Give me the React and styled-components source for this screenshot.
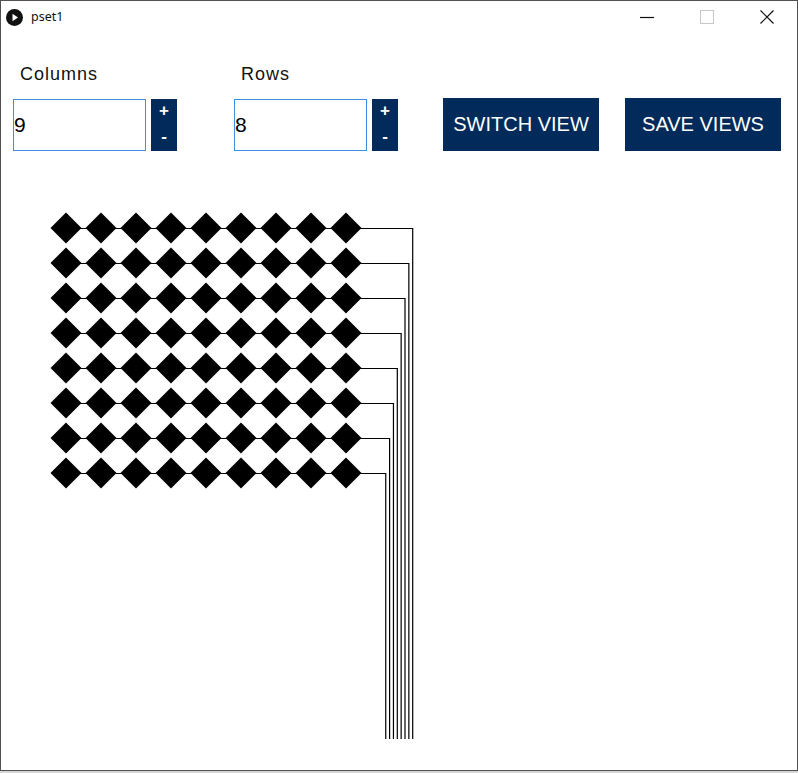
import React from "react";
import styled, { createGlobalStyle } from "styled-components";

const GlobalStyle = createGlobalStyle`
	html, body {
		margin: 0;
		padding: 0;
		background: #d6d6d6;
	}
	#root {
		width: 798px;
	}
`;

const Window = styled.div`
	box-sizing: border-box;
	width: 798px;
	height: 771px;
	border: 1px solid #505050;
	background: #fff;
	display: flex;
	flex-direction: column;
	overflow: hidden;
`;

const TitleBar = styled.div`
	height: 32px;
	display: flex;
	align-items: center;
	flex-shrink: 0;
`;

const AppIcon = styled.svg`
	width: 17px;
	height: 17px;
	margin-left: 5px;
	margin-right: 8px;
`;

const Title = styled.span`
	font-family: "Noto Sans", "Open Sans", sans-serif;
	font-size: 12.5px;
	color: #111;
	flex: 1;
	margin-top: -1px;
`;

const WinButton = styled.div`
	width: 60px;
	height: 32px;
	display: flex;
	align-items: center;
	justify-content: center;
	color: ${p => (p.$disabled ? "#c8c8c8" : "#111")};
`;

const Controls = styled.div`
	display: flex;
	align-items: flex-end;
	padding-left: 12px;
	margin-top: 30px;
	flex-shrink: 0;
`;

const Field = styled.div`
	display: flex;
	flex-direction: column;
	margin-right: ${p => p.$gap}px;
`;

const Label = styled.div`
	font-family: "Liberation Sans", Arial, sans-serif;
	font-size: 18px;
	letter-spacing: 1px;
	line-height: 22px;
	color: #111;
	margin-left: 7px;
	margin-bottom: 14px;
`;

const InputRow = styled.div`
	display: flex;
	gap: 5px;
`;

const NumberBox = styled.div`
	box-sizing: border-box;
	width: 133px;
	height: 52px;
	border: 1px solid #3d8fe0;
	background: #fff;
	display: flex;
	align-items: center;
	font-family: "Liberation Sans", Arial, sans-serif;
	font-size: 21px;
	color: #000;
`;

const Stepper = styled.div`
	width: 26px;
	height: 52px;
	background: #022a5a;
	color: #fff;
	display: flex;
	flex-direction: column;
	align-items: center;
	justify-content: space-between;
	padding: 2px 0 4px;
	box-sizing: border-box;
	font-family: "Liberation Sans", Arial, sans-serif;
	font-size: 17px;
	font-weight: bold;
	line-height: 20px;
`;

const ActionButton = styled.div`
	box-sizing: border-box;
	width: 156px;
	height: 53px;
	background: #022a5a;
	color: #fff;
	display: flex;
	align-items: center;
	justify-content: center;
	font-family: "Liberation Sans", Arial, sans-serif;
	font-size: 20px;
	margin-right: ${p => p.$gap}px;
`;

const Canvas = styled.svg`
	display: block;
	margin-top: 9px;
	width: 440px;
	height: 600px;
`;

const COLS = 9;
const ROWS = 8;
const STEP = 35;
const X0 = 66;
const Y0 = 228;
const HALF = 15.5;

function Drawing() {
	const diamonds = [];
	const wires = [];
	for (let r = 0; r < ROWS; r++) {
		const y = Y0 + r * STEP;
		const xEnd = 412.7 - r * 3.85;
		wires.push(
			<polyline
				key={"w" + r}
				points={`${X0},${y + 0.5} ${xEnd},${y + 0.5} ${xEnd},739`}
				fill="none"
				stroke="#000"
				strokeWidth="1.2"
			/>
		);
		for (let c = 0; c < COLS; c++) {
			const x = X0 + c * STEP;
			diamonds.push(
				<polygon
					key={r + "-" + c}
					points={`${x},${y - HALF} ${x + HALF},${y} ${x},${y + HALF} ${x - HALF},${y}`}
					fill="#000"
				/>
			);
		}
	}
	return (
		<Canvas viewBox="1 160 440 600">
			{wires}
			{diamonds}
		</Canvas>
	);
}

export default function App() {
	return (
		<>
			<GlobalStyle />
			<Window>
				<TitleBar>
					<AppIcon viewBox="0 0 17 17">
						<circle cx="8.5" cy="8.5" r="8.5" fill="#111" />
						<polygon points="6.5,4.8 12,8.5 6.5,12.2" fill="#fff" />
					</AppIcon>
					<Title>pset1</Title>
					<WinButton>
						<svg width="14" height="14" viewBox="0 0 14 14">
							<line x1="0" y1="7.5" x2="14" y2="7.5" stroke="currentColor" strokeWidth="1.2" />
						</svg>
					</WinButton>
					<WinButton $disabled>
						<svg width="14" height="14" viewBox="0 0 14 14">
							<rect x="0.5" y="0.5" width="13" height="13" fill="none" stroke="currentColor" strokeWidth="1" />
						</svg>
					</WinButton>
					<WinButton>
						<svg width="14" height="14" viewBox="0 0 14 14">
							<path d="M0.5 0.5 L13.5 13.5 M13.5 0.5 L0.5 13.5" stroke="currentColor" strokeWidth="1.2" />
						</svg>
					</WinButton>
				</TitleBar>
				<Controls>
					<Field $gap={57}>
						<Label>Columns</Label>
						<InputRow>
							<NumberBox>9</NumberBox>
							<Stepper>
								<span>+</span>
								<span>-</span>
							</Stepper>
						</InputRow>
					</Field>
					<Field $gap={45}>
						<Label>Rows</Label>
						<InputRow>
							<NumberBox>8</NumberBox>
							<Stepper>
								<span>+</span>
								<span>-</span>
							</Stepper>
						</InputRow>
					</Field>
					<ActionButton $gap={26}>SWITCH VIEW</ActionButton>
					<ActionButton $gap={0}>SAVE VIEWS</ActionButton>
				</Controls>
				<Drawing />
			</Window>
		</>
	);
}
